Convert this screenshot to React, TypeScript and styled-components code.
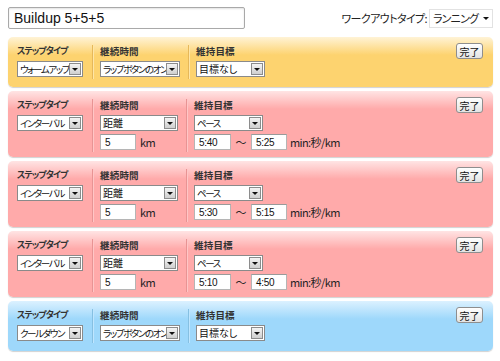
import React from "react";
import styled, { createGlobalStyle, css } from "styled-components";

const GlobalStyle = createGlobalStyle`
  html, body { margin: 0; padding: 0; background: #fff; }
  body {
    font-family: "Liberation Sans", Arial, "Noto Sans CJK JP", sans-serif;
    color: #222;
  }
  * { box-sizing: border-box; }
`;

type Tone = "yellow" | "red" | "blue";

const tones: Record<Tone, { top: string; base: string; dark: string; light: string }> = {
  yellow: { top: "#fff3d6", base: "#fdd36f", dark: "#e6b85a", light: "#ffe6a6" },
  red: { top: "#ffe4e4", base: "#ffaaaa", dark: "#e89494", light: "#ffc6c6" },
  blue: { top: "#dcf1ff", base: "#9ed8fb", dark: "#86c0e2", light: "#bfe6ff" },
};

const jp = css`
  font-family: "Noto Sans CJK JP", "Liberation Sans", sans-serif;
  font-feature-settings: "palt";
`;

const Page = styled.div`
  width: 500px;
  height: 361px;
  padding: 7px 7px 0 8px;
  display: flex;
  flex-direction: column;
`;

const Header = styled.div`
  display: flex;
  align-items: center;
  justify-content: space-between;
  height: 22px;
  margin-bottom: 8px;
`;

const TitleBox = styled.div`
  width: 237px;
  height: 22px;
  border: 1px solid #a9a9a9;
  border-radius: 2px;
  box-shadow: inset 0 1px 2px rgba(0, 0, 0, 0.12);
  background: #fff;
  padding: 0 5px;
  display: flex;
  align-items: center;
  font-size: 14px;
  color: #111;
`;

const WorkoutType = styled.div`
  display: flex;
  align-items: center;
  gap: 2px;
`;

const WorkoutLabel = styled.span`
  ${jp};
  font-size: 11px;
  letter-spacing: -0.6px;
  color: #222;
`;

const TopSelect = styled.div`
  width: 64px;
  height: 19px;
  border: 1px solid #e2e2e2;
  background: #fff;
  display: flex;
  align-items: center;
  justify-content: space-between;
  padding: 0 3px 0 3px;
  ${jp};
  font-size: 11px;
  letter-spacing: -0.8px;
`;

const SmallArrow = styled.span`
  width: 0;
  height: 0;
  border-left: 3px solid transparent;
  border-right: 3px solid transparent;
  border-top: 3px solid #111;
`;

const StepList = styled.div`
  display: flex;
  flex-direction: column;
  gap: 4px;
`;

const Panel = styled.div<{ $tone: Tone; $pb: number }>`
  display: flex;
  align-items: stretch;
  width: 485px;
  padding: 8px 10px ${(p) => p.$pb}px 9px;
  border-radius: 5px;
  background: linear-gradient(
    to bottom,
    ${(p) => tones[p.$tone].top} 0px,
    ${(p) => tones[p.$tone].base} 18px,
    ${(p) => tones[p.$tone].base} 100%
  );
  box-shadow: 0 1px 1px rgba(0, 0, 0, 0.18);
`;

const Column = styled.div<{ $pl: number; $pr: number }>`
  display: flex;
  flex-direction: column;
  padding-left: ${(p) => p.$pl}px;
  padding-right: ${(p) => p.$pr}px;
`;

const Divider = styled.div<{ $tone: Tone }>`
  width: 2px;
  margin: 0 0 -2px;
  border-left: 1px solid ${(p) => tones[p.$tone].dark};
  border-right: 1px solid ${(p) => tones[p.$tone].light};
`;

const Label = styled.div<{ $tight?: boolean }>`
  ${jp};
  font-size: ${(p) => (p.$tight ? "9px" : "9.5px")};
  font-weight: 700;
  line-height: 12px;
  height: 12px;
  letter-spacing: ${(p) => (p.$tight ? "-1px" : "0.2px")};
  color: #333;
  margin-bottom: 4px;
  white-space: nowrap;
`;

const SelectBox = styled.div<{ $w: number }>`
  width: ${(p) => p.$w}px;
  height: 16px;
  border: 1px solid #8a8a8a;
  background: #fff;
  display: flex;
  align-items: center;
  padding: 0 1px 0 2px;
`;

const SelectText = styled.span<{ $tight: boolean }>`
  ${jp};
  flex: 1;
  min-width: 0;
  font-size: ${(p) => (p.$tight ? "9.5px" : "10px")};
  line-height: 14px;
  letter-spacing: ${(p) => (p.$tight ? "-1.4px" : "0px")};
  white-space: nowrap;
  color: #111;
`;

const DropButton = styled.span`
  width: 12px;
  height: 12px;
  flex: none;
  border: 1px solid #8c8c8c;
  background: linear-gradient(to bottom, #f4f4f4, #cfcfcf);
  display: flex;
  align-items: center;
  justify-content: center;
`;

const Row = styled.div`
  display: flex;
  align-items: center;
  margin-top: 3px;
  height: 16px;
`;

const TextInput = styled.div<{ $w: number }>`
  width: ${(p) => p.$w}px;
  height: 16px;
  border: 1px solid #b5b5b5;
  border-top-color: #9a9a9a;
  background: #fff;
  padding: 0 4px;
  display: flex;
  align-items: center;
  font-size: 10px;
  letter-spacing: -0.3px;
  color: #111;
`;

const Unit = styled.span<{ $ml: number }>`
  ${jp};
  font-size: 11px;
  letter-spacing: -0.6px;
  margin-left: ${(p) => p.$ml}px;
  color: #222;
`;

const Tilde = styled.span`
  ${jp};
  width: 20px;
  text-align: center;
  font-size: 11px;
  color: #222;
`;

const DoneButton = styled.button`
  margin-left: auto;
  align-self: flex-start;
  margin-top: -2px;
  width: 27px;
  height: 16px;
  padding: 0;
  border: 1px solid #8e8e8e;
  border-radius: 3px;
  background: linear-gradient(to bottom, #ffffff, #e3e3e3);
  ${jp};
  font-size: 10px;
  line-height: 13px;
  color: #111;
`;

const isKatakanaHeavy = (t: string) => /[ァ-ヶー]{3,}/.test(t);

const Select: React.FC<{ w: number; text: string }> = ({ w, text }) => (
  <SelectBox $w={w}>
    <SelectText $tight={isKatakanaHeavy(text)}>{text}</SelectText>
    <DropButton>
      <SmallArrow />
    </DropButton>
  </SelectBox>
);

type Step = {
  tone: Tone;
  type: string;
  duration: string;
  target: string;
  distance?: string;
  from?: string;
  to?: string;
};

const steps: Step[] = [
  { tone: "yellow", type: "ウォームアップ", duration: "ラップボタンのオン", target: "目標なし" },
  { tone: "red", type: "インターバル", duration: "距離", target: "ペース", distance: "5", from: "5:40", to: "5:25" },
  { tone: "red", type: "インターバル", duration: "距離", target: "ペース", distance: "5", from: "5:30", to: "5:15" },
  { tone: "red", type: "インターバル", duration: "距離", target: "ペース", distance: "5", from: "5:10", to: "4:50" },
  { tone: "blue", type: "クールダウン", duration: "ラップボタンのオン", target: "目標なし" },
];

export default function App() {
  return (
    <>
      <GlobalStyle />
      <Page>
        <Header>
          <TitleBox>Buildup 5+5+5</TitleBox>
          <WorkoutType>
            <WorkoutLabel>ワークアウトタイプ:</WorkoutLabel>
            <TopSelect>
              <span>ランニング</span>
              <SmallArrow />
            </TopSelect>
          </WorkoutType>
        </Header>
        <StepList>
          {steps.map((s, i) => (
            <Panel key={i} $tone={s.tone} $pb={s.distance ? 7 : 10}>
              <Column $pl={0} $pr={9}>
                <Label $tight>ステップタイプ</Label>
                <Select w={66} text={s.type} />
              </Column>
              <Divider $tone={s.tone} />
              <Column $pl={6} $pr={8}>
                <Label>継続時間</Label>
                <Select w={s.distance ? 78 : 80} text={s.duration} />
                {s.distance && (
                  <Row>
                    <TextInput $w={36}>{s.distance}</TextInput>
                    <Unit $ml={4}>km</Unit>
                  </Row>
                )}
              </Column>
              <Divider $tone={s.tone} />
              <Column $pl={6} $pr={8}>
                <Label>維持目標</Label>
                <Select w={69} text={s.target} />
                {s.from && (
                  <Row>
                    <TextInput $w={37}>{s.from}</TextInput>
                    <Tilde>〜</Tilde>
                    <TextInput $w={36}>{s.to}</TextInput>
                    <Unit $ml={3}>min:秒/km</Unit>
                  </Row>
                )}
              </Column>
              <DoneButton>完了</DoneButton>
            </Panel>
          ))}
        </StepList>
      </Page>
    </>
  );
}
